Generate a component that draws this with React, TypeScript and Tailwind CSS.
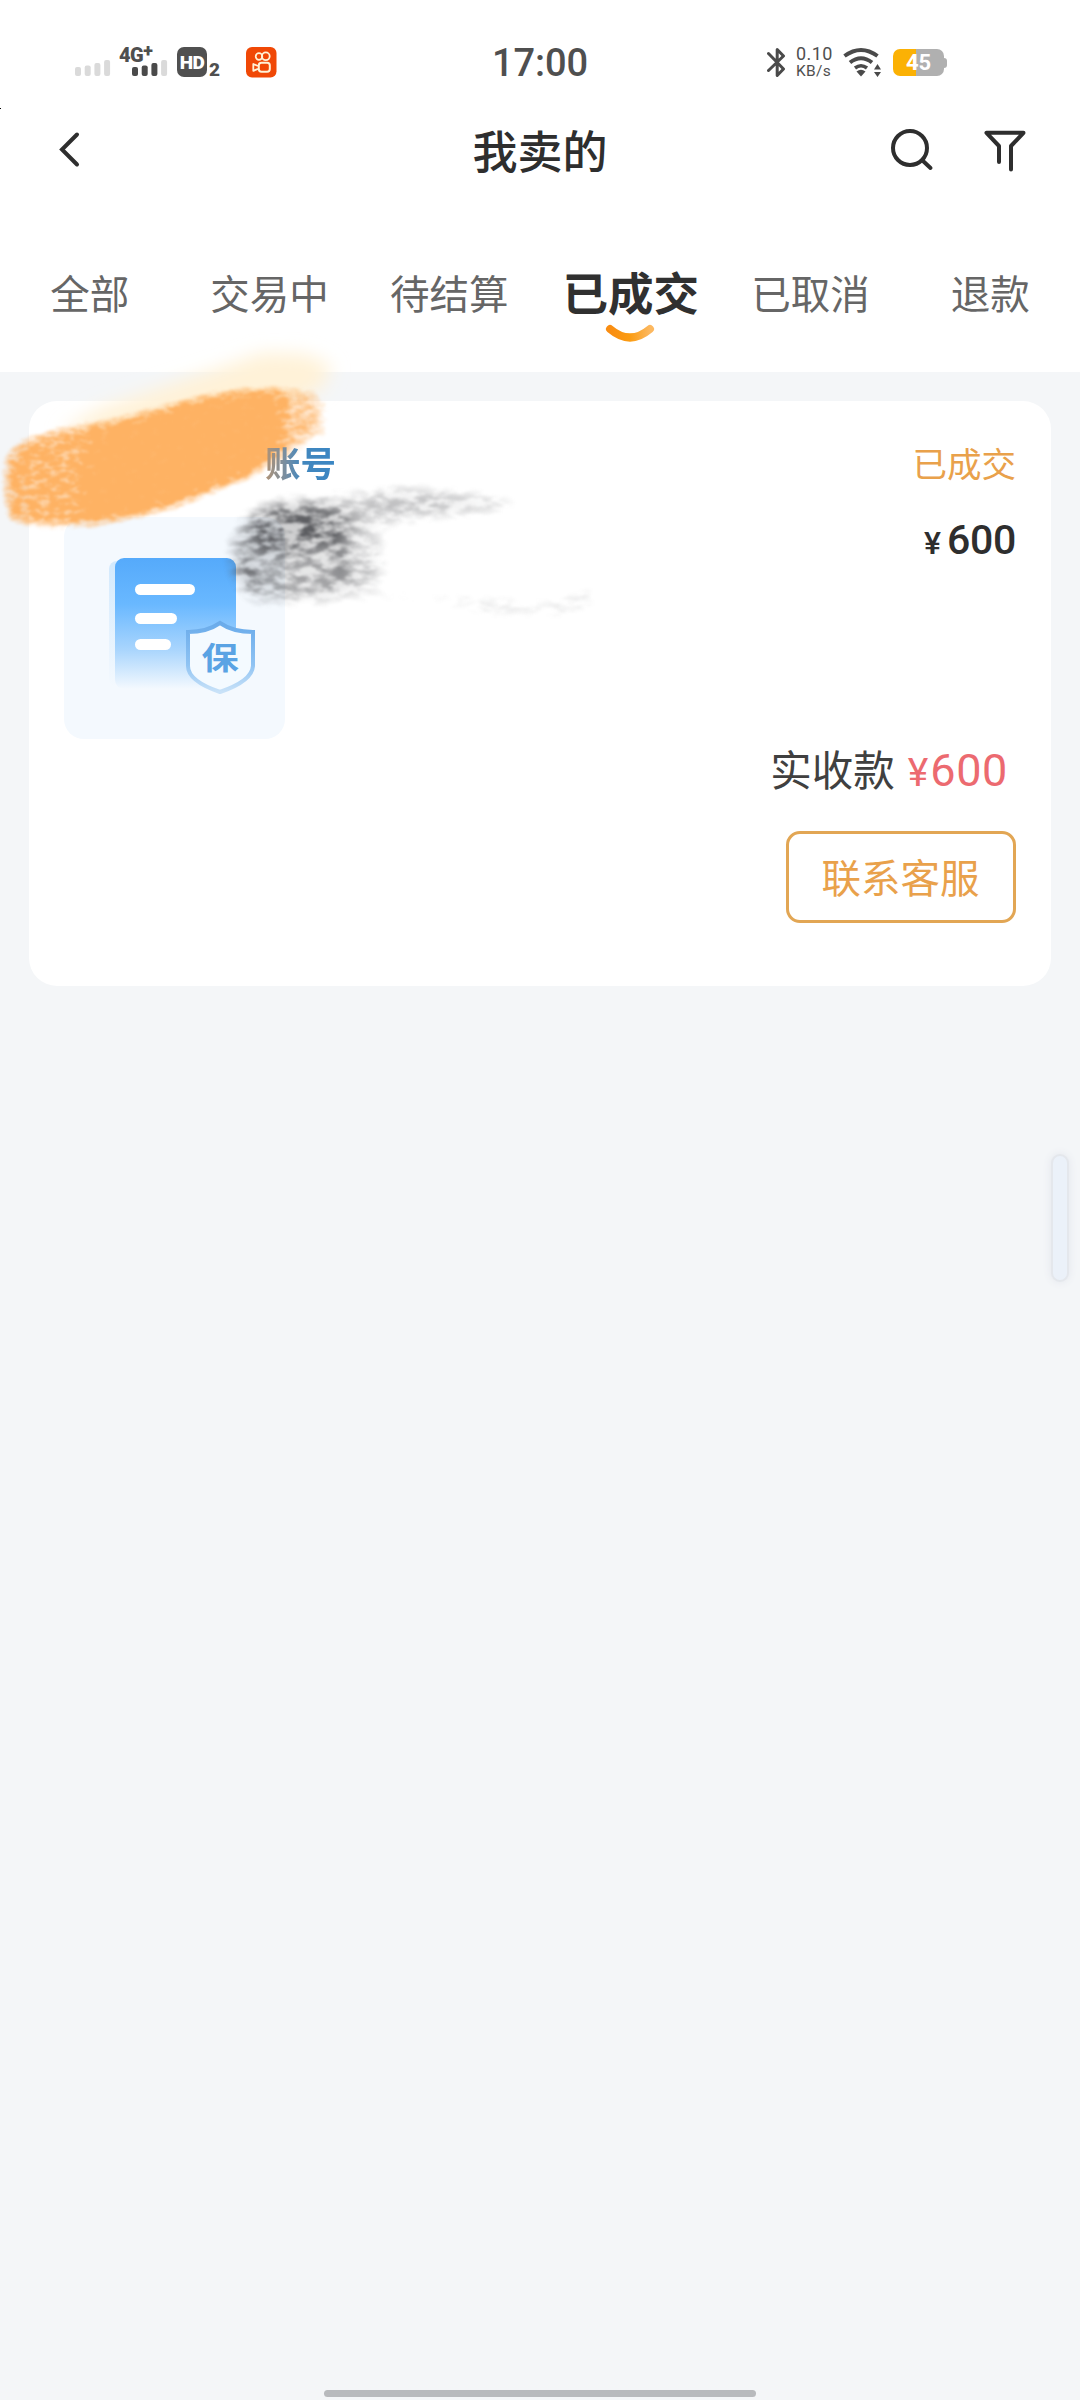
const TABS = ["全部", "交易中", "待结算", "已成交", "已取消", "退款"];
const ACTIVE = "已成交";

function Signal({ level }: { level: number }) {
  const tops = [7, 5.5, 3, 0];
  return (
    <svg width="36" height="16" viewBox="0 0 36 16">
      {tops.map((top, i) => (
        <rect
          key={i}
          x={i * 9.7}
          y={top}
          width="6"
          height={16 - top}
          rx="2"
          fill={i < level ? "#4a4a4a" : "#dadada"}
        />
      ))}
    </svg>
  );
}

function StatusBar() {
  return (
    <div className="grid grid-cols-3 h-[80px] pt-[47px] font-['Roboto',sans-serif] text-[#4f4f4f]">
      <div className="flex items-start pl-[75px]">
        <div className="pt-[13px]">
          <Signal level={0} />
        </div>
        <div className="flex flex-col ml-[8px] w-[48px]">
          <span className="h-[13px] text-[20px] leading-[11px] font-black tracking-[-0.5px]">
            4G<sup className="relative -top-[5px] text-[18px] leading-none align-baseline">+</sup>
          </span>
          <div className="ml-[13px]">
            <Signal level={3} />
          </div>
        </div>
        <div className="flex items-center justify-center ml-[10px] w-[30px] h-[30px] rounded-[7px] bg-[#505050] text-white text-[19px] leading-none font-black tracking-[-0.5px]">
          HD
        </div>
        <span className="ml-[2px] mt-[14px] text-[19px] leading-[18px] font-black">2</span>
        <svg className="ml-[26px]" width="31" height="31" viewBox="0 0 31 31" fill="none" stroke="#fff3d8">
          <rect width="30.5" height="30.5" rx="6" fill="#f04806" stroke="none" />
          <circle cx="13" cy="9.5" r="3.3" strokeWidth="1.7" />
          <circle cx="19.8" cy="9.3" r="3.9" strokeWidth="1.8" />
          <rect x="12.8" y="15.7" width="11" height="9" rx="2.6" strokeWidth="2" />
          <path d="M12 19 7.3 17v6.8L12 21.8" strokeWidth="1.8" strokeLinejoin="round" />
        </svg>
      </div>
      <div className="text-center text-[38px] leading-[32px] font-medium tracking-[-0.1px]">17:00</div>
      <div className="flex items-start justify-end pr-[133px]">
        <svg width="20" height="31" viewBox="0 0 20 31" fill="none" stroke="#4a4a4a" strokeWidth="3">
          <path d="M1.5 6.5 16.5 22 10.2 28.5V2.5L16.5 9 1.5 23.5" strokeLinecap="round" strokeLinejoin="round" />
        </svg>
        <div className="flex flex-col ml-[9px] w-[39px]">
          <span className="text-[18px] leading-[14px] tracking-[0.4px]">0.10</span>
          <span className="text-[15.5px] leading-[21px] tracking-[0.3px]">KB/s</span>
        </div>
        <svg className="ml-[8px]" width="40" height="31" viewBox="0 0 40 31" fill="none" stroke="#4a4a4a">
          <path d="M1.5 9Q18 -3 34.5 9" strokeWidth="4" />
          <path d="M7 15.500Q18 7 29 15.500" strokeWidth="4" />
          <path d="M12 21Q18 16.500 24 21" strokeWidth="3.6" />
          <path d="M13.5 24.500Q18 21 22.500 24.500L18 29.500Z" fill="#4a4a4a" stroke="none" />
          <path d="M31 22.500 34.500 17 38 22.500ZM31 25 34.500 30 38 25Z" fill="#4a4a4a" stroke="none" />
        </svg>
        <div className="flex items-center ml-[10px] mt-[2px]">
          <div className="flex items-center justify-center w-[51px] h-[27px] rounded-[7px] bg-[linear-gradient(90deg,#fbb104_45%,#b0b0b0_45%)] text-white text-[22px] leading-none font-bold">
            45
          </div>
          <div className="w-[3px] h-[10px] rounded-r-[3px] bg-[#b0b0b0]" />
        </div>
      </div>
    </div>
  );
}

function TitleBar() {
  return (
    <div className="grid grid-cols-3 items-center h-[140px] text-[#2e2e2e]">
      <svg className="ml-[56px]" width="28" height="40" viewBox="0 0 28 40" fill="none" stroke="currentColor" strokeWidth="4">
        <path d="M21 4.500 6 19.500 21 34.500" strokeLinecap="round" />
      </svg>
      <h1 className="text-center text-[45px] leading-[60px] font-medium">我卖的</h1>
      <div className="flex justify-end pr-[53px] pb-[3px]">
        <svg width="46" height="46" viewBox="0 0 46 46" fill="none" stroke="currentColor" strokeWidth="4">
          <circle cx="22" cy="22" r="17" />
          <path d="M34.500 34.500 42.500 42" strokeLinecap="round" />
        </svg>
        <svg className="ml-[49px]" width="44" height="46" viewBox="0 0 44 46" fill="none" stroke="currentColor" strokeWidth="4">
          <path d="M16 36V20L3.500 6.800H40.500L28 20V43.500" strokeLinecap="round" strokeLinejoin="round" />
        </svg>
      </div>
    </div>
  );
}

function Tabs() {
  return (
    <div className="flex h-[152px]">
      {TABS.map((tab) =>
        tab === ACTIVE ? (
          <div key={tab} className="flex flex-1 flex-col items-center pt-[41px] pl-[2px] text-[45.5px] leading-[60px] font-bold text-[#303030]">
            {tab}
            <svg className="mt-[2px]" width="52" height="22" viewBox="0 0 52 22" fill="none">
              <defs>
                <linearGradient id="smile">
                  <stop offset="0" stopColor="#f98d12" />
                  <stop offset="0.5" stopColor="#fb9c12" />
                  <stop offset="1" stopColor="#fcb860" />
                </linearGradient>
              </defs>
              <path d="M5 6Q25 23 45 6" stroke="url(#smile)" strokeWidth="8" strokeLinecap="round" />
            </svg>
          </div>
        ) : (
          <div key={tab} className="flex-1 pt-[42px] text-center text-[39.5px] leading-[60px] text-[#666]">
            {tab}
          </div>
        )
      )}
    </div>
  );
}

function Thumb() {
  return (
    <svg width="224" height="224" viewBox="0 0 224 224">
      <defs>
        <linearGradient id="doc" x2="0" y2="1">
          <stop offset="0" stopColor="#55aafb" />
          <stop offset="0.35" stopColor="#69b8ff" />
          <stop offset="0.7" stopColor="#a9d5fd" />
          <stop offset="1" stopColor="#f4f9fe" />
        </linearGradient>
        <linearGradient id="edge" x2="0" y2="1">
          <stop offset="0" stopColor="#d2e9fd" />
          <stop offset="1" stopColor="#f4f9fe" />
        </linearGradient>
        <linearGradient id="shield" x2="0" y2="1">
          <stop offset="0" stopColor="#6aabea" />
          <stop offset="0.6" stopColor="#8fc3f3" />
          <stop offset="1" stopColor="#c9e2f8" />
        </linearGradient>
      </defs>
      <rect width="221" height="222" rx="20" fill="#f4f9fe" />
      <rect x="45" y="44" width="20" height="126" rx="8" fill="url(#edge)" />
      <rect x="51" y="41" width="121" height="131" rx="9" fill="url(#doc)" />
      <rect x="71" y="67" width="60" height="11" rx="5.5" fill="#fff" />
      <rect x="71" y="96" width="42" height="11" rx="5.5" fill="#fff" />
      <rect x="71" y="122" width="36" height="11" rx="5.5" fill="#fff" />
      <path
        d="M156 106Q169 115 189 115V149Q188 164 156 175Q124 164 124 149V115Q143 115 156 106Z"
        fill="#f4faff"
        stroke="url(#shield)"
        strokeWidth="4"
      />
      <text
        transform="translate(156 152) scale(1.2 1)"
        textAnchor="middle"
        fontSize="31"
        className="fill-[#5aa3e4] font-bold"
      >
        保
      </text>
    </svg>
  );
}

function OrderCard() {
  return (
    <div className="flex flex-col ml-[29px] w-[1022px] h-[585px] rounded-[28px] bg-white pl-[35px] pr-[35px]">
      <div className="flex justify-between pt-[35px] h-[116px] text-[34.5px] leading-[52px]">
        <span className="relative z-20 ml-[201px] text-[35.5px] font-bold bg-linear-to-r from-[#b09274] via-[#4287bd] to-[#3a86c4] bg-clip-text text-transparent">
          账号
        </span>
        <span className="text-[#e9a14b]">已成交</span>
      </div>
      <div className="flex justify-between h-[224px]">
        <Thumb />
        <div className="flex items-baseline h-[50px] font-['Roboto',sans-serif] font-medium text-[#2e2e2e]">
          <span className="text-[32px] mr-[6px]">¥</span>
          <span className="text-[41px] leading-[46px] tracking-[-0.3px]">600</span>
        </div>
      </div>
      <div className="flex justify-end items-baseline h-[90px] pr-[8px] text-[#404040]">
        <span className="text-[41.5px] leading-[54px]">实收款</span>
        <span className="ml-[13px] text-[39px] font-['Roboto',sans-serif] text-[#ec6a70]">¥</span>
        <span className="ml-[2px] text-[45px] leading-[54px] tracking-[0.6px] font-['Roboto',sans-serif] text-[#ec6a70]">600</span>
      </div>
      <button className="self-end w-[230px] h-[92px] rounded-[14px] border-3 border-[#e2a654] pr-px pb-[2px] text-[39.5px] leading-[80px] text-[#e9a14b]">
        联系客服
      </button>
    </div>
  );
}

// dry-brush smears lying over the card's top left corner
function Smears() {
  return (
    <svg className="absolute left-0 top-[320px] z-10 pointer-events-none" width="640" height="340" viewBox="0 320 640 340">
      <defs>
        <filter id="haze" x="-20%" y="-30%" width="140%" height="160%">
          <feGaussianBlur stdDeviation="9" />
        </filter>
        <filter id="chalk" filterUnits="userSpaceOnUse" x="0" y="360" width="370" height="200" colorInterpolationFilters="sRGB">
          <feGaussianBlur in="SourceAlpha" stdDeviation="6" result="soft" />
          <feTurbulence type="fractalNoise" baseFrequency="0.1 0.2" numOctaves="4" seed="4" />
          <feColorMatrix values="0 0 0 0 0  0 0 0 0 0  0 0 0 0 0  2.4 0 0 0 -0.7" result="grain" />
          <feComposite in="soft" in2="grain" operator="arithmetic" k1="1" k2="1.3" k4="-0.34" result="shape" />
          <feFlood floodColor="#feb263" />
          <feComposite in2="shape" operator="in" />
          <feGaussianBlur stdDeviation="0.9" />
        </filter>
        <filter id="charcoal" filterUnits="userSpaceOnUse" x="200" y="470" width="440" height="170" colorInterpolationFilters="sRGB">
          <feGaussianBlur in="SourceAlpha" stdDeviation="7" result="soft" />
          <feTurbulence type="fractalNoise" baseFrequency="0.06 0.13" numOctaves="5" seed="21" />
          <feColorMatrix values="0 0 0 0 0  0 0 0 0 0  0 0 0 0 0  3.4 0 0 0 -1.2" result="grain" />
          <feComposite in="soft" in2="grain" operator="arithmetic" k1="0.85" k2="0.4" k4="-0.04" result="shape" />
          <feFlood floodColor="#515256" />
          <feComposite in2="shape" operator="in" />
          <feGaussianBlur stdDeviation="0.8" />
        </filter>
      </defs>
      <path
        d="M60 432 100 408 160 388 220 368 262 353 305 354 332 366 322 388 300 400 200 420 100 435Z"
        fill="#fff2d8"
        filter="url(#haze)"
      />
      <path d="M345 520 470 508 585 540 600 580 570 600 400 592 340 590Z" fill="#fff" opacity="0.9" filter="url(#haze)" />
      <g filter="url(#chalk)">
        <path d="M95 426 150 412 200 398 240 391 278 390 282 410 280 440 272 458 254 474 215 489 180 504 140 515 90 524 78 510Z" />
        <path d="M6 455 24 440 56 430 100 422 110 445 90 470 100 524 45 527 8 520 5 485Z" opacity="0.72" />
        <path d="M272 388 322 390 305 396 336 402 308 408 338 415 310 422 334 432 305 440 300 450 270 466Z" opacity="0.55" />
      </g>
      <g filter="url(#charcoal)">
        <path d="M230 548 246 516 280 501 320 500 345 512 352 550 345 580 335 598 255 600 236 578Z" opacity="0.45" />
        <path d="M248 532 266 510 312 506 345 526 336 544 300 550 262 556Z" opacity="0.6" />
        <path d="M236 562 254 562 258 588 242 588Z" opacity="0.55" />
        <path d="M320 500 400 489 460 494 525 506 450 513 400 520 335 532Z" opacity="0.32" />
        <path d="M330 515 370 525 385 545 372 580 335 592Z" opacity="0.24" />
        <path d="M340 562 392 570 360 588 430 600 340 596Z" opacity="0.2" />
        <path d="M400 594 500 602 545 606 590 592 600 600 560 612 500 612Z" opacity="0.22" />
      </g>
    </svg>
  );
}

export default function App() {
  return (
    <div className="relative flex flex-col w-[1080px] h-[2400px] overflow-hidden bg-[#f4f6f8] font-['Noto_Sans_CJK_SC',sans-serif]">
      <div className="bg-white h-[372px]">
        <StatusBar />
        <TitleBar />
        <Tabs />
      </div>
      <div className="flex-1 pt-[29px]">
        <OrderCard />
      </div>
      <div className="self-center mb-[3px] w-[432px] h-[7px] rounded-full bg-[#b8babd]" />
      <Smears />
      <div className="absolute left-0 top-[108px] w-px h-px bg-black" />
      <div className="absolute left-[1051px] top-[1154px] w-[18px] h-[128px] rounded-full border-2 border-[#e4e7ec] bg-[#ebf1f9] shadow-[0_0_8px_#e2e5ec]" />
    </div>
  );
}
